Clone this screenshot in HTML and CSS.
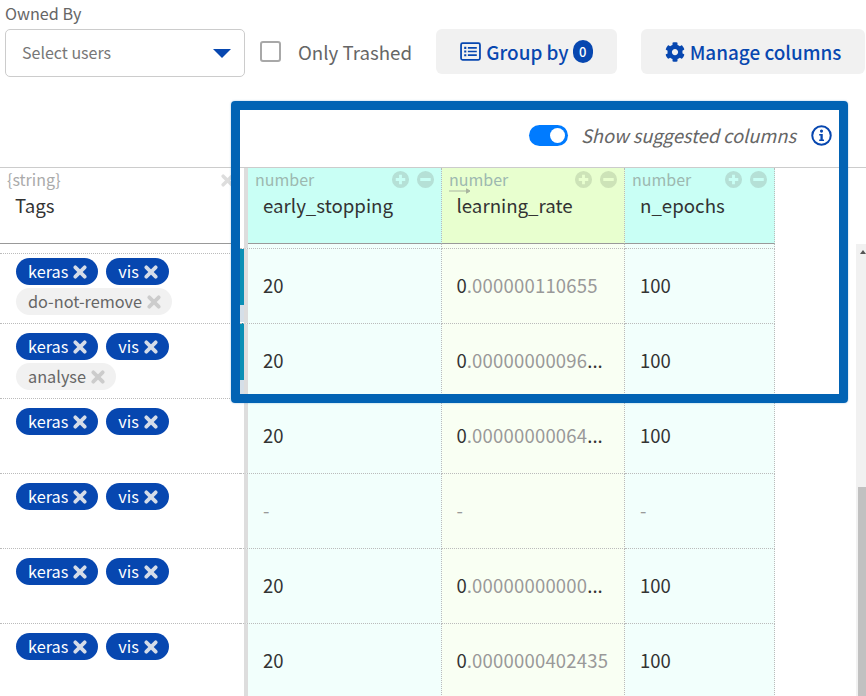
FILE: index.html
```html
<!DOCTYPE html>
<html lang="en">
<head>
<meta charset="utf-8">
<title>Experiments</title>
<link rel="stylesheet" href="styles.css">
</head>
<body>
<div class="page">
  <div class="toolbar">
    <div class="owner">
      <div class="owner-label">Owned By</div>
      <div class="select"><span>Select users</span><i class="caret"></i></div>
    </div>
    <label class="trash"><i class="checkbox"></i><span>Only Trashed</span></label>
    <button class="btn btn-group">
      <svg class="ico-list" viewBox="0 0 20 18"><rect x="1" y="1" width="18" height="16" rx="1.5" fill="none" stroke="currentColor" stroke-width="1.7"/><path d="M4 4.500h2v2H4zM4 8h2v2H4zM4 11.500h2v2H4zM7.500 4.700h8.500v1.600H7.500zM7.500 8.200h8.500v1.600H7.500zM7.500 11.700h8.500v1.600H7.500z" fill="currentColor"/></svg>
      <span>Group by</span><span class="badge">0</span>
    </button>
    <button class="btn btn-manage">
      <svg class="ico-gear" viewBox="0 0 512 512"><path fill="currentColor" d="M487.400 315.700l-42.600-24.600c4.300-23.200 4.300-47 0-70.200l42.600-24.600c4.900-2.800 7.100-8.600 5.500-14-11.100-35.600-30-67.800-54.700-94.600-3.800-4.100-10-5.100-14.800-2.300L380.800 110c-17.900-15.400-38.500-27.300-60.800-35.100V25.800c0-5.600-3.900-10.500-9.400-11.700-36.700-8.200-74.300-7.800-109.200 0-5.500 1.200-9.400 6.100-9.400 11.700V75c-22.200 7.900-42.800 19.800-60.800 35.100L88.700 85.500c-4.900-2.800-11-1.900-14.800 2.300-24.700 26.700-43.600 58.900-54.700 94.600-1.700 5.400.6 11.200 5.500 14L67.300 221c-4.300 23.200-4.300 47 0 70.200l-42.600 24.600c-4.900 2.800-7.100 8.600-5.500 14 11.100 35.600 30 67.800 54.700 94.600 3.800 4.100 10 5.100 14.800 2.300l42.600-24.600c17.900 15.400 38.500 27.300 60.800 35.100v49.200c0 5.600 3.900 10.500 9.400 11.700 36.700 8.200 74.300 7.800 109.200 0 5.500-1.200 9.400-6.100 9.400-11.700v-49.200c22.200-7.900 42.800-19.800 60.800-35.100l42.600 24.600c4.900 2.800 11 1.900 14.800-2.300 24.700-26.700 43.600-58.900 54.700-94.600 1.500-5.500-.7-11.300-5.600-14.100zM256 336c-44.100 0-80-35.900-80-80s35.900-80 80-80 80 35.900 80 80-35.900 80-80 80z"/></svg>
      <span>Manage columns</span>
    </button>
  </div>

  <div class="table">
    <div class="head">
      <div class="hcell hcell-tags">
        <div class="htype">{string}</div>
        <div class="htitle">Tags</div>
        <svg class="hclose" viewBox="0 0 12 12"><path d="M2 2l8 8M10 2l-8 8" stroke="#ddd" stroke-width="3.200" stroke-linecap="round"/></svg>
      </div>
      <div class="hgap"></div>
      <div class="hcell col-a h-teal">
        <div class="htype">number</div><div class="htitle">early_stopping</div>
        <div class="hactions"><svg class="act" viewBox="0 0 20 20"><use href="#plus"/></svg><svg class="act" viewBox="0 0 20 20"><use href="#minus"/></svg></div>
      </div>
      <div class="hcell col-b h-green">
        <div class="htype">number</div><div class="htitle">learning_rate</div>
        <svg class="harrow" viewBox="0 0 22 6"><path d="M0 3h20M17.500 .8L21 3l-3.500 2.200z" stroke="#a9b5a0" stroke-width="1" fill="#a9b5a0"/></svg>
        <div class="hactions"><svg class="act" viewBox="0 0 20 20"><use href="#plus"/></svg><svg class="act" viewBox="0 0 20 20"><use href="#minus"/></svg></div>
      </div>
      <div class="hcell col-c h-teal">
        <div class="htype">number</div><div class="htitle">n_epochs</div>
        <div class="hactions"><svg class="act" viewBox="0 0 20 20"><use href="#plus"/></svg><svg class="act" viewBox="0 0 20 20"><use href="#minus"/></svg></div>
      </div>
    </div>

    <div class="tbody">
      <div class="rows">
        <div class="row row-spacer">
          <div class="cell-tags"></div><div class="strip"></div><div class="cell col-a c-teal"></div><div class="cell col-b c-green"></div><div class="cell col-c c-teal"></div>
        </div>
        <div class="row">
          <div class="cell-tags">
            <span class="chip chip-on">keras<svg class="x" viewBox="0 0 12 12"><path d="M2 2l8 8M10 2l-8 8"/></svg></span>
            <span class="chip chip-on">vis<svg class="x" viewBox="0 0 12 12"><path d="M2 2l8 8M10 2l-8 8"/></svg></span>
            <span class="chip">do-not-remove<svg class="x" viewBox="0 0 12 12"><path d="M2 2l8 8M10 2l-8 8"/></svg></span>
          </div>
          <div class="strip strip-on"></div>
          <div class="cell col-a c-teal">20</div>
          <div class="cell col-b c-green">0<span class="dec">.000000110655</span></div>
          <div class="cell col-c c-teal">100</div>
        </div>
        <div class="row">
          <div class="cell-tags">
            <span class="chip chip-on">keras<svg class="x" viewBox="0 0 12 12"><path d="M2 2l8 8M10 2l-8 8"/></svg></span>
            <span class="chip chip-on">vis<svg class="x" viewBox="0 0 12 12"><path d="M2 2l8 8M10 2l-8 8"/></svg></span>
            <span class="chip">analyse<svg class="x" viewBox="0 0 12 12"><path d="M2 2l8 8M10 2l-8 8"/></svg></span>
          </div>
          <div class="strip strip-on"></div>
          <div class="cell col-a c-teal">20</div>
          <div class="cell col-b c-green">0<span class="dec">.00000000096</span>...</div>
          <div class="cell col-c c-teal">100</div>
        </div>
        <div class="row">
          <div class="cell-tags">
            <span class="chip chip-on">keras<svg class="x" viewBox="0 0 12 12"><path d="M2 2l8 8M10 2l-8 8"/></svg></span>
            <span class="chip chip-on">vis<svg class="x" viewBox="0 0 12 12"><path d="M2 2l8 8M10 2l-8 8"/></svg></span>
          </div>
          <div class="strip"></div>
          <div class="cell col-a c-teal">20</div>
          <div class="cell col-b c-green">0<span class="dec">.00000000064</span>...</div>
          <div class="cell col-c c-teal">100</div>
        </div>
        <div class="row">
          <div class="cell-tags">
            <span class="chip chip-on">keras<svg class="x" viewBox="0 0 12 12"><path d="M2 2l8 8M10 2l-8 8"/></svg></span>
            <span class="chip chip-on">vis<svg class="x" viewBox="0 0 12 12"><path d="M2 2l8 8M10 2l-8 8"/></svg></span>
          </div>
          <div class="strip"></div>
          <div class="cell col-a c-teal dash">-</div>
          <div class="cell col-b c-green dash">-</div>
          <div class="cell col-c c-teal dash">-</div>
        </div>
        <div class="row">
          <div class="cell-tags">
            <span class="chip chip-on">keras<svg class="x" viewBox="0 0 12 12"><path d="M2 2l8 8M10 2l-8 8"/></svg></span>
            <span class="chip chip-on">vis<svg class="x" viewBox="0 0 12 12"><path d="M2 2l8 8M10 2l-8 8"/></svg></span>
          </div>
          <div class="strip"></div>
          <div class="cell col-a c-teal">20</div>
          <div class="cell col-b c-green">0<span class="dec">.00000000000</span>...</div>
          <div class="cell col-c c-teal">100</div>
        </div>
        <div class="row">
          <div class="cell-tags">
            <span class="chip chip-on">keras<svg class="x" viewBox="0 0 12 12"><path d="M2 2l8 8M10 2l-8 8"/></svg></span>
            <span class="chip chip-on">vis<svg class="x" viewBox="0 0 12 12"><path d="M2 2l8 8M10 2l-8 8"/></svg></span>
          </div>
          <div class="strip"></div>
          <div class="cell col-a c-teal">20</div>
          <div class="cell col-b c-green">0<span class="dec">.0000000402435</span></div>
          <div class="cell col-c c-teal">100</div>
        </div>
      </div>
      <div class="scrollbar"><i class="scroll-up"></i><div class="thumb"></div></div>
    </div>
  </div>

  <div class="highlight">
    <div class="suggest">
      <span class="toggle"><i class="knob"></i></span>
      <em class="suggest-label">Show suggested columns</em>
      <svg class="ico-info" viewBox="0 0 20 20"><circle cx="10" cy="10" r="8.800" fill="none" stroke="currentColor" stroke-width="1.900"/><circle cx="10" cy="5.800" r="1.500" fill="currentColor"/><path d="M7.800 8.500h3.400v5.200h1.200v1.500H7.800v-1.500H9v-3.700H7.800z" fill="currentColor"/></svg>
    </div>
  </div>
</div>

<svg class="defs" aria-hidden="true">
  <symbol id="plus" viewBox="0 0 20 20"><path fill-rule="evenodd" d="M10 1a9 9 0 1 0 0 18 9 9 0 0 0 0-18zM8.500 5h3v3.500H15v3h-3.500V15h-3v-3.500H5v-3h3.500z"/></symbol>
  <symbol id="minus" viewBox="0 0 20 20"><path fill-rule="evenodd" d="M10 1a9 9 0 1 0 0 18 9 9 0 0 0 0-18zM4.500 8.500h11v3h-11z"/></symbol>
</svg>
</body>
</html>
```
FILE: styles.css
```css
* { box-sizing: border-box; }
html, body { margin: 0; padding: 0; height: 696px; overflow: hidden; background: #fff; }
body { font-family: "Noto Sans CJK SC", "Noto Sans", sans-serif; color: #333; }
i, em { display: block; }
.defs { display: none; }

.page { position: relative; width: 866px; height: 696px; overflow: hidden; }

.toolbar { display: flex; align-items: flex-start; height: 167px; padding: 4px 0 0 5px; }
.owner { flex: none; width: 240px; margin-right: 15px; }
.owner-label { height: 19px; margin-bottom: 6px; font-size: 16.200px; line-height: 19px; color: #666; }
.select { display: flex; align-items: center; justify-content: space-between; height: 48px; padding: 0 13px 2px 16px; border: 1px solid #ccc; border-radius: 5px; font-size: 16px; color: #777; }
.caret { width: 0; height: 0; margin-top: 2px; border-left: 9px solid transparent; border-right: 9px solid transparent; border-top: 9px solid #0747b0; }

.trash { flex: none; display: flex; align-items: flex-start; width: 176px; margin-top: 37px; font-size: 18.700px; line-height: 22px; color: #666; white-space: nowrap; }
.checkbox { flex: none; width: 21px; height: 21px; margin-right: 17px; border: 2px solid #a8a8a8; border-radius: 3px; }

.btn { flex: none; display: flex; align-items: center; justify-content: center; height: 45px; margin-top: 25px; padding: 0; border: 0; border-radius: 6px; background: #f1f1f1; font-family: inherit; font-size: 18.900px; font-weight: 500; color: #0747b0; }
.btn-group { width: 181px; margin-right: 24px; }
.btn-manage { width: 224px; }
.ico-list { width: 21px; height: 19px; margin-right: 5px; }
.ico-gear { width: 20px; height: 20px; margin-right: 5px; }
.badge { display: flex; align-items: center; justify-content: center; width: 20px; height: 23px; margin-left: 4px; border-radius: 10px; background: #0747b0; font-size: 13px; color: #fff; }

.table { display: flex; flex-direction: column; border-top: 1px solid #ccc; }
.head { display: flex; height: 76px; }
.hcell { position: relative; height: 76px; border-bottom: 1px solid #999; }
.hcell-tags { width: 240px; padding-left: 7px; }
.hgap { width: 8px; border-right: 4px solid #ddd; }
.htype { height: 23px; padding-top: 2px; font-size: 16px; line-height: 19px; color: #aaa; }
.col-a .htype, .col-b .htype, .col-c .htype { padding-left: 7px; color: #9db8b0; }
.htitle { padding-left: 8px; font-size: 18.700px; line-height: 28px; color: #333; }
.col-a .htitle, .col-c .htitle { padding-left: 15px; }
.col-b .htitle { padding-left: 14.500px; }
.hclose { position: absolute; top: 6px; left: 221px; width: 13px; height: 13px; }
.harrow { position: absolute; top: 20px; left: 7px; width: 22px; height: 6px; }
.hactions { position: absolute; top: 2px; right: 6px; display: flex; gap: 6px; }
.act { width: 19px; height: 19px; fill: #b5e0d6; }
.h-green .act { fill: #cde3b8; }

.col-a { width: 194px; border-right: 1px dotted #bbb; }
.col-b { width: 183px; border-right: 1px dotted #bbb; }
.col-c { width: 150px; border-right: 1px dotted #bbb; }
.h-teal { background: #c9fff5; }
.h-green { background: #e8ffcf; }
.c-teal { background: #f2fffc; }
.c-green { background: #f9fff3; }

.tbody { display: flex; justify-content: space-between; }
.rows { display: flex; flex-direction: column; }
.row { display: flex; height: 75px; }
.row-spacer { height: 5px; }
.cell-tags { display: flex; flex-wrap: wrap; align-content: flex-start; gap: 3px 8px; width: 240px; padding: 9px 30px 0 16px; border-bottom: 1px dotted #bbb; }
.strip { width: 4px; border-bottom: 1px dotted #bbb; }
.strip-on { background: linear-gradient(#0a8fb5 0 56px, #d5dfe8 56px 73px, #fff 73px); }
.cell { display: flex; align-items: center; padding: 0 0 2px 15px; border-bottom: 1px dotted #bbb; font-size: 18.500px; color: #333; white-space: nowrap; }
.cell.col-b { padding-left: 14.500px; }
.row .col-a { width: 198px; border-left: 4px solid #ddd; }
.dec { color: #999; letter-spacing: .2px; }
.dash { color: #999; }

.chip { display: inline-flex; align-items: center; height: 27px; padding: 0 11px 0 12px; border-radius: 14px; background: #f1f1f1; font-size: 16.300px; line-height: 27px; color: #666; }
.chip-on { background: #0747b0; color: #fff; }
.x { width: 14px; height: 14px; margin-left: 5px; fill: none; stroke: #ccc; stroke-width: 3.200; stroke-linecap: round; }
.chip-on .x { stroke: #d5dce8; }

.scrollbar { position: relative; width: 10px; background: #f1f1f1; }
.scroll-up { position: absolute; top: 6px; left: 4px; width: 0; height: 0; border-left: 3px solid transparent; border-right: 3px solid transparent; border-bottom: 4px solid #555; }
.thumb { position: absolute; top: 243px; left: 2px; width: 8px; height: 300px; background: #c1c1c1; }

.highlight { position: absolute; top: 101px; left: 231px; width: 617px; height: 302px; border: 9px solid #0263b4; border-radius: 4px; box-shadow: 0 0 2px rgba(2, 99, 180, .4); }
.suggest { display: flex; align-items: center; justify-content: flex-end; height: 50px; padding: 0 7px 0 0; }
.toggle { display: flex; align-items: center; justify-content: flex-end; width: 39px; height: 21px; margin-right: 13px; padding-right: 3px; border-radius: 11px; background: #007bff; }
.knob { width: 15px; height: 15px; border-radius: 50%; background: #fff; }
.suggest-label { font-size: 18.300px; font-style: italic; color: #666; margin-right: 15px; }
.ico-info { width: 21px; height: 21px; color: #0747b0; }
```
